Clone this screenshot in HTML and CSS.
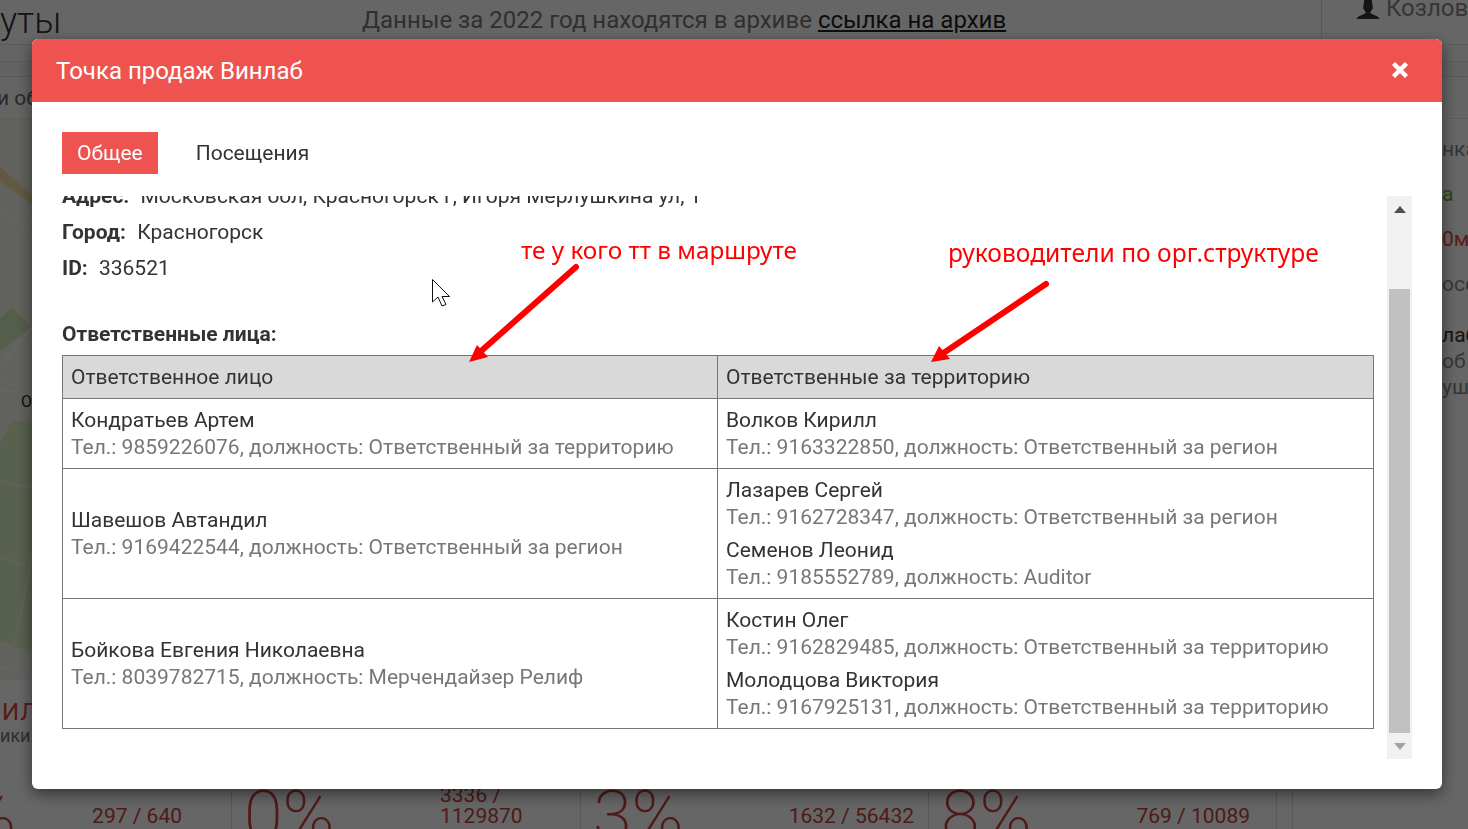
FILE: index.html
```html
<!DOCTYPE html>
<html lang="ru">
<head>
<meta charset="utf-8">
<title>Точка продаж Винлаб</title>
<link rel="stylesheet" href="styles.css">
</head>
<body>
<div class="page">
  <header class="topbar">
    <div class="page-title">уты</div>
    <div class="archive">Данные за 2022 год находятся в архиве <a class="archive-link" href="#">ссылка на архив</a></div>
    <div class="user">
      <svg class="user-icon" viewBox="0 0 24 20"><path d="M8 0h8l1 7c0 2-1 4-2.500 5.500v1.500l8 3.500 1.500 2.500H0l1.500-2.500 8-3.500v-1.500C8 11 7 9 7 7z"/></svg>
      <span>Козлов</span>
    </div>
  </header>
  <div class="subbar">
    <div class="subbar-road"></div>
    <div class="subbar-label">и об</div>
  </div>
  <main class="content">
    <section class="left">
      <div class="map">
        <svg class="map-svg" viewBox="0 0 32 561" preserveAspectRatio="none">
          <rect width="32" height="561" fill="#f2f2ea"/>
          <path d="M0 48L32 76V86L0 62Z" fill="#f3dfa4"/>
          <path d="M0 90L32 109M0 95L32 113" stroke="#fff" stroke-width="1" fill="none"/>
          <path d="M0 200L12 188L27 204L30 209L0 232Z" fill="#d2ecb8"/>
          <path d="M0 246L32 209" stroke="#fff" stroke-width="1.500" fill="none"/>
          <path d="M0 262L20 269M0 272H20" stroke="#fff" stroke-width="1" fill="none"/>
          <path d="M12 302L32 302V534L0 521V325Z" fill="#dcf0c4"/>
          <path d="M0 362L32 369M0 437L25 446M32 437L15 525" stroke="#f4f4ec" stroke-width="1.500" fill="none"/>
          <path d="M0 548L32 556" stroke="#fff" fill="none"/>
        </svg>
        <span class="map-label">О</span>
      </div>
      <div class="left-red">ИЛ</div>
      <div class="left-sub">ики</div>
    </section>
    <section class="center"></section>
    <aside class="right">
      <div class="right-tab">нка</div>
      <div class="right-green">а</div>
      <div class="right-red">0м</div>
      <div class="right-grey">осе</div>
      <div class="right-dark">лаб</div>
      <div class="right-grey-tight">об</div>
      <div class="right-grey-tight">уш</div>
    </aside>
  </main>
  <footer class="stats">
    <div class="stat stat-a"><span class="stat-pct">%</span><span class="stat-num">297 / 640</span></div>
    <div class="stat stat-b"><span class="stat-pct">0%</span><span class="stat-num">3336 / 1129870</span></div>
    <div class="stat stat-c"><span class="stat-pct">3%</span><span class="stat-num">1632 / 56432</span></div>
    <div class="stat stat-d"><span class="stat-pct">8%</span><span class="stat-num">769 / 10089</span></div>
    <div class="stat stat-e"></div>
  </footer>
</div>

<div class="backdrop"></div>

<div class="modal">
  <div class="modal-head">
    <h1 class="modal-title">Точка продаж Винлаб</h1>
    <svg class="close" viewBox="0 0 18 18"><path d="M2.500 2.500L15.500 15.500M15.500 2.500L2.500 15.500" stroke="#fff" stroke-width="4.400"/></svg>
  </div>
  <div class="modal-body">
    <nav class="tabs">
      <a class="tab tab-active">Общее</a>
      <a class="tab">Посещения</a>
    </nav>
    <div class="scroll">
      <div class="scroll-view">
        <div class="scroll-inner">
          <p class="field"><b>Адрес:</b> Московская обл, Красногорск г, Игоря Мерлушкина ул, 1</p>
          <p class="field"><b>Город:</b> Красногорск</p>
          <p class="field"><b>ID:</b> 336521</p>
          <p class="section-title">Ответственные лица:</p>
          <table class="people">
            <thead>
              <tr><th class="col-main">Ответственное лицо</th><th>Ответственные за территорию</th></tr>
            </thead>
            <tbody>
              <tr>
                <td>
                  <div class="person"><div class="name">Кондратьев Артем</div><div class="info">Тел.: 9859226076, должность: Ответственный за территорию</div></div>
                </td>
                <td>
                  <div class="person"><div class="name">Волков Кирилл</div><div class="info">Тел.: 9163322850, должность: Ответственный за регион</div></div>
                </td>
              </tr>
              <tr>
                <td>
                  <div class="person"><div class="name">Шавешов Автандил</div><div class="info">Тел.: 9169422544, должность: Ответственный за регион</div></div>
                </td>
                <td>
                  <div class="person"><div class="name">Лазарев Сергей</div><div class="info">Тел.: 9162728347, должность: Ответственный за регион</div></div>
                  <div class="person"><div class="name">Семенов Леонид</div><div class="info">Тел.: 9185552789, должность: Auditor</div></div>
                </td>
              </tr>
              <tr>
                <td>
                  <div class="person"><div class="name">Бойкова Евгения Николаевна</div><div class="info">Тел.: 8039782715, должность: Мерчендайзер Релиф</div></div>
                </td>
                <td>
                  <div class="person"><div class="name">Костин Олег</div><div class="info">Тел.: 9162829485, должность: Ответственный за территорию</div></div>
                  <div class="person"><div class="name">Молодцова Виктория</div><div class="info">Тел.: 9167925131, должность: Ответственный за территорию</div></div>
                </td>
              </tr>
            </tbody>
          </table>
        </div>
      </div>
      <div class="scrollbar">
        <div class="sb-btn"><svg class="sb-arrow" viewBox="0 0 12 7"><path d="M6 0L12 7H0Z" fill="#505050"/></svg></div>
        <div class="sb-gap"></div>
        <div class="sb-thumb"></div>
        <div class="sb-btn"><svg class="sb-arrow" viewBox="0 0 12 7"><path d="M0 0H12L6 7Z" fill="#a3a3a3"/></svg></div>
      </div>
    </div>
  </div>
</div>

<div class="note note-left">те у кого тт в маршруте</div>
<div class="note note-right">руководители по орг.структуре</div>
<svg class="marks" viewBox="0 0 1468 829">
  <path d="M576 267L480 352" stroke="#f00" stroke-width="6" stroke-linecap="round"/>
  <path d="M469 362L477 345L488 357Z" fill="#f00"/>
  <path d="M1046 284L942 354" stroke="#f00" stroke-width="6" stroke-linecap="round"/>
  <path d="M931 362L939 346L950 359Z" fill="#f00"/>
  <path d="M432.500 279.500V302L438 297L442 306L446 304.500L442 296.500L449.500 296.500Z" fill="#fff" stroke="#111" stroke-width="1"/>
</svg>
</body>
</html>
```

FILE: styles.css
```css
* { box-sizing: border-box; }
html, body { margin: 0; height: 100%; overflow: hidden; }
body { font-family: Roboto, "Noto Sans", sans-serif; color: #333; background: #fff; }

/* page beneath the dialog */
.page { height: 829px; display: flex; flex-direction: column; overflow: hidden; }
.topbar { height: 45px; flex: none; display: flex; border-bottom: 1px solid #e4e4e4; }
.page-title { width: 120px; font-size: 36px; font-weight: 300; line-height: 42px; color: #333; }
.archive { flex: 1; padding-left: 242px; font-size: 24px; line-height: 40px; color: #777; white-space: nowrap; }
.archive-link { color: #222; text-decoration: underline; }
.user { width: 147px; border-left: 1px solid #ddd; padding: 0 0 0 34px; display: flex; align-items: flex-start; gap: 6px; font-size: 24px; line-height: 16px; color: #888; overflow: hidden; }
.user-icon { width: 24px; height: 19px; flex: none; fill: #333; }
.subbar { height: 74px; flex: none; background: #fafafa; border-bottom: 1px solid #e8e8e8; padding-top: 16px; }
.subbar-road { height: 16px; border-top: 1px solid #e4e4e4; border-bottom: 1px solid #ddd; background: #f4f4f4; }
.subbar-label { font-size: 21px; line-height: 24px; padding-top: 9px; margin-left: -3px; color: #666; white-space: nowrap; }
.content { flex: 1; display: flex; min-height: 0; }
.left { width: 32px; flex: none; overflow: hidden; }
.map { height: 561px; position: relative; overflow: hidden; }
.map-svg { display: block; width: 32px; height: 561px; }
.map-label { position: absolute; left: 21px; top: 273px; font-size: 16px; line-height: 20px; color: #222; }
.left-red { margin-top: 17px; padding-left: 2px; font-size: 24px; line-height: 30px; color: #d9453e; white-space: nowrap; letter-spacing: 1px; }
.left-sub { font-size: 18px; line-height: 18px; color: #777; white-space: nowrap; }
.center { flex: 1; }
.right { width: 26px; flex: none; overflow: hidden; white-space: nowrap; font-size: 21px; color: #888; }
.right-tab { margin-top: 18px; line-height: 24px; }
.right-green { margin-top: 21px; line-height: 24px; color: #5cb03c; }
.right-red { margin-top: 21px; line-height: 24px; color: #e04a42; }
.right-grey { margin-top: 21px; line-height: 24px; }
.right-dark { margin-top: 27px; line-height: 24px; color: #333; }
.right-grey-tight { margin-top: 2px; line-height: 24px; }
.stats { height: 49px; flex: none; display: flex; overflow: hidden; color: #c8413b; }
.stat { display: flex; align-items: flex-start; border-right: 1px solid #ddd; overflow: hidden; flex: none; }
.stat-a { width: 232px; }
.stat-b { width: 349px; }
.stat-c { width: 348px; }
.stat-d { width: 348px; }
.stat-e { width: 16px; }
.stat-pct { font-size: 70px; font-weight: 200; line-height: 70px; padding: 1px 0 0 12px; white-space: nowrap; }
.stat-num { margin-left: auto; padding: 24px 14px 0 0; font-size: 21px; line-height: 24px; }
.stat-a .stat-pct { margin-left: -48px; }
.stat-a .stat-num { padding-right: 49px; }
.stat-b .stat-num { width: 140px; flex: none; padding: 5px 0 0 0; line-height: 21px; }
.stat-d .stat-num { padding-right: 26px; }

/* overlay */
.backdrop { position: fixed; inset: 0; background: rgba(0, 0, 0, .6); }
.modal { position: fixed; left: 32px; top: 39px; width: 1410px; height: 750px; background: #fff; border-radius: 6px; box-shadow: 0 5px 15px rgba(0, 0, 0, .5); overflow: hidden; display: flex; flex-direction: column; }
.modal-head { height: 63px; flex: none; background: #ef5350; display: flex; align-items: center; justify-content: space-between; padding: 0 33px 0 24px; }
.modal-title { margin: 0; font-size: 24px; font-weight: 400; line-height: 32px; color: #fff; }
.close { width: 18px; height: 18px; margin-bottom: 2px; }
.modal-body { flex: 1; min-height: 0; display: flex; flex-direction: column; padding: 30px; }
.tabs { display: flex; gap: 23px; height: 42px; flex: none; }
.tab { padding: 0 15px; font-size: 21px; line-height: 42px; color: #333; }
.tab-active { background: #ef5350; color: #fff; }
.scroll { margin-top: 22px; flex: 1; min-height: 0; display: flex; }
.scroll-view { flex: 1; min-width: 0; overflow: hidden; }
.scroll-inner { margin-top: -13px; width: 1312px; font-size: 21px; line-height: 27px; color: #333; }
.field { margin: 0 0 9px; line-height: 27px; }
.field b { font-weight: 700; margin-right: 6px; }
.section-title { margin: 39px 0 7px; font-weight: 700; line-height: 27px; }
.people { width: 1312px; border-collapse: collapse; table-layout: fixed; }
.people th, .people td { border: 1px solid #767676; padding: 8px 8px 7px; text-align: left; vertical-align: middle; font-weight: 400; }
.people th { background: #d9d9d9; color: #333; }
.col-main { width: 655px; }
.person + .person { margin-top: 6px; }
.name { color: #333; }
.info { color: #777; }
.scrollbar { width: 25px; flex: none; background: #f1f1f1; display: flex; flex-direction: column; }
.sb-btn { height: 26px; flex: none; display: flex; align-items: center; justify-content: center; }
.sb-arrow { width: 12px; height: 7px; }
.sb-gap { height: 67px; flex: none; }
.sb-thumb { flex: 1; margin: 0 2px; background: #c1c1c1; }

/* annotations drawn over the screenshot */
.note { position: fixed; font-family: "Noto Sans", sans-serif; line-height: 30px; color: #f00; white-space: nowrap; }
.note-left { left: 521px; top: 235px; font-size: 24.300px; }
.note-right { left: 948px; top: 238px; font-size: 24.600px; }
.marks { position: fixed; left: 0; top: 0; width: 1468px; height: 829px; pointer-events: none; }
```
